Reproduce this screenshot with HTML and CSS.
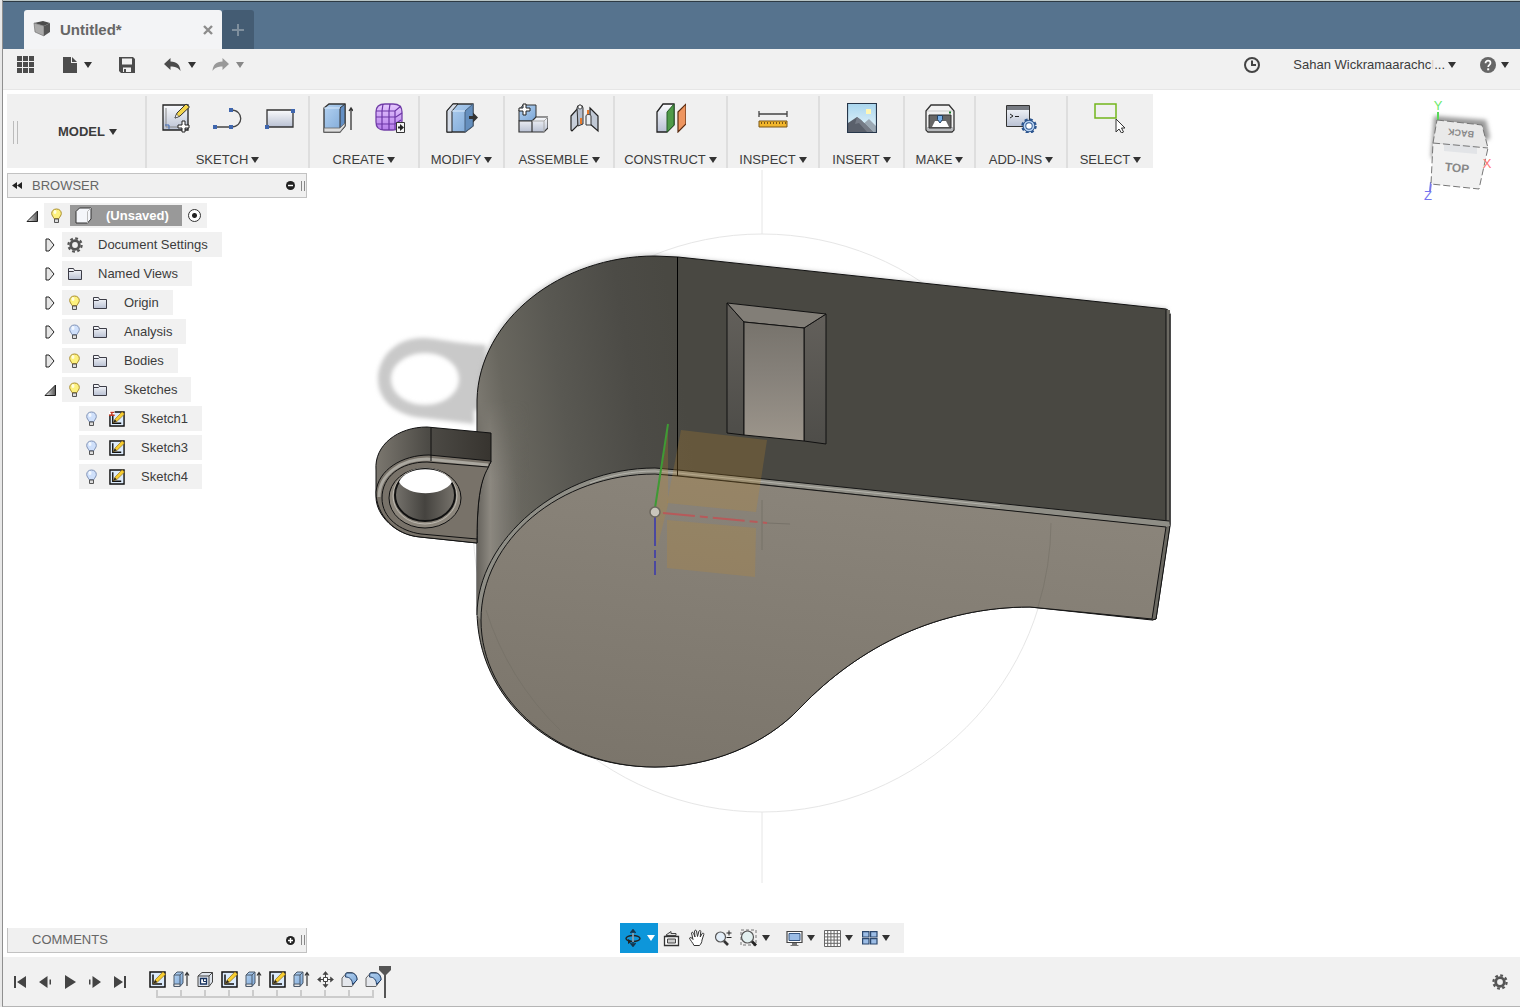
FILE: index.html
```html
<!DOCTYPE html>
<html lang="en">
<head>
<meta charset="utf-8">
<title>Untitled*</title>
<link rel="stylesheet" href="styles.css">
</head>
<body>
<svg class="sprite" aria-hidden="true">
  <defs>
    <linearGradient id="blue" x1="0" y1="0" x2="1" y2="1"><stop offset="0" stop-color="#b5d3f2"/><stop offset="1" stop-color="#7ba6d6"/></linearGradient>
    <linearGradient id="steel" x1="0" y1="0" x2="0" y2="1"><stop offset="0" stop-color="#fafbfd"/><stop offset="1" stop-color="#b9c1d3"/></linearGradient>
    <linearGradient id="violet" x1="0" y1="0" x2="0" y2="1"><stop offset="0" stop-color="#e6c9ff"/><stop offset="1" stop-color="#b57cea"/></linearGradient>
    <linearGradient id="sky" x1="0" y1="0" x2="0" y2="1"><stop offset="0" stop-color="#a9d6ee"/><stop offset="1" stop-color="#e9f6fb"/></linearGradient>
    <linearGradient id="twist" x1="0" y1="0" x2="1" y2="0"><stop offset="0" stop-color="#eee"/><stop offset="1" stop-color="#555"/></linearGradient>
  </defs>
  <symbol id="bulb-on" viewBox="0 0 12 16"><path d="M6 1C3 1 1.200 3 1.200 5.500c0 2 1.500 3 2.300 5h5c.8-2 2.300-3 2.300-5C10.800 3 9 1 6 1z" fill="#fdf17e" stroke="#a98d2c"/><ellipse cx="4.500" cy="4" rx="1.500" ry="2" fill="#fffde0"/><path d="M4 11h4v3.500H4z" fill="#ddd" stroke="#555"/></symbol>
  <symbol id="bulb-off" viewBox="0 0 12 16"><path d="M6 1C3 1 1.200 3 1.200 5.500c0 2 1.500 3 2.300 5h5c.8-2 2.300-3 2.300-5C10.800 3 9 1 6 1z" fill="#cfe0fb" stroke="#8092b5"/><ellipse cx="4.500" cy="4" rx="1.500" ry="2" fill="#f3f8ff"/><path d="M4 11h4v3.500H4z" fill="#ddd" stroke="#555"/></symbol>
  <symbol id="folder" viewBox="0 0 16 16"><path d="M1.500 13.500V2.500h5l1 2h7v9z" fill="url(#steel)" stroke="#3c3c46"/><path d="M1.500 5.500h5l1-1" fill="none" stroke="#3c3c46"/></symbol>
  <symbol id="gear" viewBox="0 0 16 16"><circle cx="8" cy="8" r="4.300" fill="none" stroke="#555" stroke-width="2.800"/><circle cx="8" cy="8" r="6.600" fill="none" stroke="#555" stroke-width="2.200" stroke-dasharray="2.800 2.384"/></symbol>
  <symbol id="sketch" viewBox="0 0 17 17"><path d="M1 1h15v15H1z" fill="#dcebfb" stroke="#111" stroke-width="1.500"/><path d="M4 3.500V13h9" fill="none" stroke="#111" stroke-width="1.500"/><path d="M4.500 12.500l2-4L14 .8l2.500 2.500L8.500 11z" fill="#f8cf31" stroke="#8f6a14" stroke-width=".7"/><path d="M4.500 12.500l1.700-3.600 2 2z" fill="#222"/></symbol>
  <symbol id="extrude" viewBox="0 0 17 17"><path d="M1 4l3-3h6v11l-3 3.500H1z" fill="url(#blue)" stroke="#4d5a6b"/><path d="M1 4h6l3-3M7 4v11" fill="none" stroke="#4d5a6b"/><path d="M1 13h6v2.500H1z" fill="#e5e5e5" stroke="#4d5a6b"/><path d="M14 15V2M12 4.500L14 1.500l2 3" fill="none" stroke="#333" stroke-width="1.200"/></symbol>
  <symbol id="shell" viewBox="0 0 17 17"><path d="M1 5l4-3.500h10.500V11L12 15.500H1z" fill="#dfe5ed" stroke="#444"/><path d="M1 5h11l3.500-3.500M12 5v10.500" fill="none" stroke="#444"/><path d="M3.500 7.500h6v5.500h-6z" fill="#fff" stroke="#17335f" stroke-width="1.300"/><path d="M6.500 7.500v3h3" fill="none" stroke="#17335f"/></symbol>
  <symbol id="move" viewBox="0 0 17 17"><path d="M8.500.5l2.500 3H6zM8.500 16.500l2.500-3H6zM.5 8.500l3-2.500v5zM16.500 8.500l-3-2.500v5z" fill="#444" stroke="#444" stroke-width=".6"/><path d="M8.500 3v3M8.500 11v3M3 8.500h3M11 8.500h3" stroke="#444"/><path d="M6.500 6.500h4v4h-4z" fill="#fff" stroke="#444"/></symbol>
  <symbol id="fillet" viewBox="0 0 17 17"><path d="M1 15.500V7l5-5.500h4c3 0 6 3 6 7l-5 7z" fill="#e4e7ec" stroke="#666"/><path d="M5 2h5c4 0 6 3 6 7l-4.500 4.500C11.500 9 9 6 4.500 6z" fill="url(#blue)" stroke="#1f3e69"/></symbol>
</svg>

<div class="app">
  <header class="tabbar">
    <div class="tab">
      <svg width="18" height="20" viewBox="0 0 18 20"><path d="M1 3l9-2 7 2-6 3z" fill="#4b4b4b"/><path d="M1 3l10 3v10L2 12z" fill="#aaa" stroke="#666" stroke-width=".6"/><path d="M11 6l6-3v9l-6 4z" fill="#555"/></svg>
      <span class="tab-name">Untitled*</span>
      <button class="plain" aria-label="Close tab"><svg width="10" height="10" viewBox="0 0 10 10"><path d="M1 1l8 8M9 1L1 9" stroke="#8c8c8c" stroke-width="2.400"/></svg></button>
    </div>
    <button class="tab-add" aria-label="New tab"><svg width="12" height="12" viewBox="0 0 12 12"><path d="M6 0v12M0 6h12" stroke="#7f8f9d" stroke-width="2"/></svg></button>
  </header>

  <nav class="quickbar">
    <button class="plain q-grid" aria-label="Data panel"><svg width="18" height="18" viewBox="0 0 18 18" fill="#4c4c4c"><path d="M0 0h5v5H0zM6 0h5v5H6zM12 0h5v5h-5zM0 6h5v5H0zM6 6h5v5H6zM12 6h5v5h-5zM0 12h5v5H0zM6 12h5v5H6zM12 12h5v5h-5z"/></svg></button>
    <button class="plain q-file" aria-label="File"><svg width="14" height="16" viewBox="0 0 14 16"><path d="M0 0h8v6h6v10H0z" fill="#4c4c4c"/><path d="M9 0l5 5H9z" fill="#4c4c4c"/></svg><i class="caret"></i></button>
    <button class="plain q-save" aria-label="Save"><svg width="16" height="16" viewBox="0 0 16 16"><path d="M0 0h14l2 2v14H2l-2-2z" fill="#4c4c4c"/><path d="M3 1.500h10v6H3zM4 10.500h8V15H4z" fill="#f1f1f1"/><path d="M5 12h2v3H5z" fill="#4c4c4c"/></svg></button>
    <button class="plain q-undo" aria-label="Undo"><svg width="17" height="14" viewBox="0 0 17 14"><path d="M0 6l6.500-6v3.500C13 3.500 16 7 16.500 13 14 9.500 11 8.500 6.500 8.500V12z" fill="#4c4c4c"/></svg><i class="caret"></i></button>
    <button class="plain q-redo" aria-label="Redo"><svg width="17" height="14" viewBox="0 0 17 14"><path d="M17 6l-6.500-6v3.500C4 3.500 1 7 .5 13 3 9.500 6 8.500 10.500 8.500V12z" fill="#999"/></svg><i class="caret caret-dim"></i></button>
    <span class="spacer"></span>
    <button class="plain" aria-label="Job status"><svg width="18" height="18" viewBox="0 0 18 18" fill="none" stroke="#444" stroke-width="2"><circle cx="9" cy="9" r="7"/><path d="M9 4.500V9h4"/></svg></button>
    <button class="plain q-user"><span>Sahan Wickramaarachc<span class="cut">l</span>...</span><i class="caret"></i></button>
    <button class="plain q-help" aria-label="Help"><svg width="16" height="16" viewBox="0 0 16 16"><circle cx="8" cy="8" r="8" fill="#666"/><path d="M5.500 6.200C5.500 2.800 10.500 3 10.500 6c0 1.800-2.300 1.900-2.300 4" fill="none" stroke="#fff" stroke-width="1.700"/><path d="M7.200 11.300h2v2h-2z" fill="#fff"/></svg><i class="caret"></i></button>
  </nav>

  <main class="workspace">
    <svg class="scene" viewBox="3 90 1517 867" role="img" aria-label="Whistle model">
      <defs>
        <linearGradient id="side" gradientUnits="userSpaceOnUse" x1="477" y1="380" x2="678" y2="350"><stop offset="0" stop-color="#7a776f"/><stop offset=".12" stop-color="#69675f"/><stop offset=".4" stop-color="#595852"/><stop offset=".75" stop-color="#4c4b46"/><stop offset="1" stop-color="#494842"/></linearGradient>
        <linearGradient id="bend" gradientUnits="userSpaceOnUse" x1="477" y1="0" x2="530" y2="0"><stop offset="0" stop-color="#66635d"/><stop offset=".25" stop-color="#8c8880"/><stop offset="1" stop-color="#5f5e58" stop-opacity="0"/></linearGradient>
        <linearGradient id="bendfade" gradientUnits="userSpaceOnUse" x1="0" y1="400" x2="0" y2="480"><stop offset="0" stop-color="#000"/><stop offset="1" stop-color="#fff"/></linearGradient>
        <mask id="lower"><path d="M470 380h100v300H470z" fill="url(#bendfade)"/></mask>
        <linearGradient id="face" gradientUnits="userSpaceOnUse" x1="700" y1="470" x2="660" y2="770"><stop offset="0" stop-color="#8a847a"/><stop offset="1" stop-color="#7b756b"/></linearGradient>
        <linearGradient id="pit" x1="0" y1="0" x2="0" y2="1"><stop offset="0" stop-color="#77736c"/><stop offset=".45" stop-color="#86817a"/><stop offset="1" stop-color="#9c958b"/></linearGradient>
        <linearGradient id="wall" x1="0" y1="0" x2="0" y2="1"><stop offset="0" stop-color="#63605b"/><stop offset="1" stop-color="#4e4d49"/></linearGradient>
        <linearGradient id="lugtop" x1="0" y1="0" x2="1" y2="0"><stop offset="0" stop-color="#7b776f"/><stop offset=".45" stop-color="#4d4b46"/><stop offset="1" stop-color="#37342f"/></linearGradient>
        <linearGradient id="bore" x1="0" y1="0" x2="1" y2="0"><stop offset="0" stop-color="#75726c"/><stop offset=".5" stop-color="#45433f"/><stop offset="1" stop-color="#77736c"/></linearGradient>
        <filter id="soft" x="-10%" y="-10%" width="120%" height="120%"><feGaussianBlur stdDeviation="2"/></filter>
      </defs>
      <g fill="none" stroke="#e6e6e6"><circle cx="762" cy="523" r="289"/><path d="M762 170v64M762 812v71"/></g>
      <path d="M486 345C450 343 438 338 422 338C395 338 378 358 378 379C378 402 398 416 424 418L474 424V410H486z M425 353C443 353 459 364 459 379S443 405 425 405S391 394 391 379S407 353 425 353z" fill="#c9c9c9" fill-rule="evenodd" filter="url(#soft)"/>
      <path d="M479 390C485 310 570 256 655 256L1167 310" fill="none" stroke="#bbb" stroke-width="3" filter="url(#soft)"/>

      <path d="M477 400C479 320 560 256 655 256L678 257L1166 309Q1170 310 1170 314V524L1156 619L1152 620L1030 607C940 607 860 645 800 708C765 745 710 767 655 767C555 767 477 700 477 610z" fill="url(#side)" stroke="#111"/>
      <path d="M477 400H540V540C505 550 490 580 481 620L477 610z" fill="url(#bend)" mask="url(#lower)"/>

      <path d="M376 470C374 445 398 427 427 427L491 433V462C480 478 477 500 477 543L420 537C395 535 376 515 376 497z" fill="url(#lugtop)" stroke="#111"/>
      <path d="M376 492C378 470 402 455 429 455L491 461L488 468C480 482 477 502 477 543L420 537C395 535 376 515 376 492z" fill="#787269" stroke="#111"/>
      <path d="M379 497C379 474 402 459 427 459L488 465" fill="none" stroke="#aaa79f" stroke-width="3"/>
      <path d="M488 467L427 462C400 462 382 477 382 498C382 518 400 531 421 534L477 539" fill="none" stroke="#111"/>
      <path d="M431 427v34" stroke="#111"/>
      <ellipse cx="425" cy="498" rx="36" ry="30" fill="#8c867c" stroke="#111"/>
      <ellipse cx="425" cy="496" rx="32" ry="28" fill="none" stroke="#bdb9b1"/>
      <ellipse cx="425" cy="495" rx="30" ry="26" fill="url(#bore)" stroke="#111" stroke-width="2"/>
      <path d="M399 482C406 465 444 465 452 482C443 497 408 497 399 482z" fill="#fff"/>

      <path d="M1166 310h4v214l-14 95-4 1 14-95z" fill="#6b6962"/>
      <path d="M1166 310v213M1170 314v212" stroke="#111"/>
      <path d="M477 615C477 540 560 468 655 468L678 470L1169 521L1170 526L1165 527L678 475L655 474C560 474 481 540 481 620z" fill="#8f8e86"/>
      <path d="M655 474C560 474 481 540 481 620C481 701 560 767 655 767C710 767 765 745 800 708C860 645 940 607 1030 607L1152 619L1166 527L678 476z" fill="url(#face)"/>
      <path d="M477 615C477 540 560 468 655 468L678 470L1169 521" fill="none" stroke="#151515"/>
      <path d="M590 483C611 475 633 471 655 471L678 473L1000 506" fill="none" stroke="#b3b2ab"/>
      <path d="M655 474C560 474 481 540 481 620C481 701 560 767 655 767C710 767 765 745 800 708C860 645 940 607 1030 607L1152 619L1166 527L678 476z" fill="none" stroke="#151515"/>
      <path d="M1170 526l-14 93-4 1" fill="none" stroke="#151515"/>
      <path d="M677.500 257v219" stroke="#000"/>

      <g stroke="#111" stroke-linejoin="round">
        <path d="M727 303L744 322V435L727 433z" fill="url(#wall)"/>
        <path d="M826 314L804 328V441L826 444z" fill="url(#wall)"/>
        <path d="M727 303L826 314L804 328L744 322z" fill="#827e77"/>
        <path d="M744 322L804 328V441L744 435z" fill="url(#pit)"/>
      </g>

      <g fill="#c08a2a" fill-opacity=".24">
        <path d="M681 430L767 440L756 512L667 503z"/>
        <path d="M667 520L756 528L755 577L667 568z"/>
        <path d="M668 426V505L657 548L655 515z"/>
      </g>
      <path d="M655 508L668 424" stroke="#3f9a35" stroke-width="2"/>
      <path d="M663 513L767 523" stroke="#b65a5a" stroke-width="2" stroke-dasharray="32 5 8 5"/>
      <path d="M767 523L790 524M762 500V550" stroke="#777269"/>
      <path d="M655 514V575" stroke="#4b48a0" stroke-width="2" stroke-dasharray="32 4 8 3"/>
      <circle cx="655" cy="512" r="5" fill="#c9c5bb" stroke="#6c675e" stroke-width="1.500"/>
      <path d="M1051 523A289 289 0 0 1 1038 607M486 610A289 289 0 0 0 560 730" fill="none" stroke="#706b62" stroke-opacity=".5"/>
    </svg>

    <svg class="viewcube" width="80" height="110" viewBox="1420 95 80 110" role="img" aria-label="View cube">
      <path d="M1434 116L1486 120L1490 138L1470 150L1431 158z" fill="#999" filter="url(#soft)"/>
      <path d="M1438 112V121" stroke="#58d858" stroke-width="2"/>
      <path d="M1431 182L1430 191" stroke="#7777e8" stroke-width="2"/>
      <path d="M1437 120L1482 125L1488 148L1433 143z" fill="#e9e9e9"/>
      <path d="M1433 143L1488 148L1479 189L1431 184z" fill="#f1f1f1"/>
      <path d="M1444 143l33 3v8l-33-3z" fill="#e2e4e7"/>
      <path d="M1437 120L1482 125L1488 148L1479 189L1431 184L1433 143zM1433 143L1488 148" fill="none" stroke="#777" stroke-dasharray="7 3"/>
      <text class="cube-top" x="1457" y="172" transform="rotate(6 1457 168)">TOP</text>
      <text class="cube-back" x="1461" y="136" transform="rotate(186 1461 133)">BACK</text>
      <text class="axis axis-y" x="1438" y="110">Y</text>
      <text class="axis axis-x" x="1487" y="168">X</text>
      <text class="axis axis-z" x="1428" y="200">Z</text>
    </svg>

    <div class="ribbon">
      <div class="mode"><span class="grip"></span><button class="plain mode-name">MODEL <i class="caret"></i></button></div>
      <section class="group">
        <div class="tools">
          <button class="plain" aria-label="Create sketch"><svg width="30" height="30" viewBox="0 0 30 30"><path d="M2 2h25v25H2z" fill="url(#steel)" stroke="#222" stroke-width="1.300"/><path d="M5 5v19h19" fill="none" stroke="#888"/><path d="M4 22h4v4" fill="none" stroke="#3e6bb5"/><path d="M14 15l2-5 9-9 3.500 3L19 13z" fill="#f3d54b" stroke="#333"/><path d="M14 15l1.500-4 2.500 2.500z" fill="#fff" stroke="#333" stroke-width=".6"/><path d="M21 18h3v4h4v3h-4v4h-3v-4h-4v-3h4z" fill="#fff" stroke="#222"/></svg></button>
          <button class="plain" aria-label="Line"><svg width="30" height="30" viewBox="0 0 30 30"><path d="M2 24h16c13 0 13-17 0-17" fill="none" stroke="#444" stroke-width="1.300"/><path d="M0 22h4v4H0zM16 22h4v4h-4zM16 5h4v4h-4z" fill="#3f66ae"/></svg></button>
          <button class="plain" aria-label="Rectangle"><svg width="30" height="30" viewBox="0 0 30 30"><path d="M2 7h26v17H2z" fill="url(#steel)" stroke="#333" stroke-width="1.300"/><path d="M0 22h4v4H0zM26 6h4v4h-4z" fill="#3f66ae"/></svg></button>
        </div>
        <button class="plain label">SKETCH <i class="caret"></i></button>
      </section>
      <section class="group">
        <div class="tools">
          <button class="plain" aria-label="Extrude"><svg width="30" height="30" viewBox="0 0 30 30"><path d="M1 5l5-4h16v22l-5 6H1z" fill="url(#blue)" stroke="#333" stroke-width="1.300"/><path d="M17 5l5-4v22l-5 6z" fill="#638fc4" stroke="#333"/><path d="M1 25h16l5-5v3l-5 6H1z" fill="#ddd" stroke="#666" stroke-width=".8"/><path d="M1 5h16" stroke="#d8e8fa"/><path d="M28 27V6M26 8l2-3 2 3" fill="none" stroke="#333" stroke-width="1.300"/></svg></button>
          <button class="plain" aria-label="Create form"><svg width="30" height="30" viewBox="0 0 30 30"><path d="M1 9c0-5 3-8 9-8h8c6 0 9 3 9 8v9c0 6-3 9-9 9h-9c-5 0-8-3-8-8z" fill="url(#violet)" stroke="#7340a8" stroke-width="1.300"/><path d="M1 8h19l6-5M1 14h20l6-4M1 21h19l6-4M8 1L7 8v19M15 1l-1 7v19M20 8v18" fill="none" stroke="#6b35a5" stroke-width="1.200"/><path d="M21.500 19.500h8v10h-8z" fill="#f4f4f4" stroke="#333"/><path d="M23 23.500h2v-2.500l4 3.500-4 3.500V25.500h-2z" fill="#222"/></svg></button>
        </div>
        <button class="plain label">CREATE <i class="caret"></i></button>
      </section>
      <section class="group">
        <div class="tools">
          <button class="plain" aria-label="Press pull"><svg width="32" height="30" viewBox="0 0 32 30"><path d="M1 8l6-7h20v22l-8 6H1z" fill="url(#blue)" stroke="#333" stroke-width="1.300"/><path d="M1 8l6-7h5L6 8v21H1z" fill="#d5dce7" stroke="#222"/><path d="M19 8l8-7v22l-8 6z" fill="#658fbe" stroke="#46617f"/><path d="M6 8h13" stroke="#dcebfa"/><path d="M23 13h4V9.500l5 5-5 5V16h-4z" fill="#333"/></svg></button>
        </div>
        <button class="plain label">MODIFY <i class="caret"></i></button>
      </section>
      <section class="group">
        <div class="tools">
          <button class="plain" aria-label="New component"><svg width="30" height="30" viewBox="0 0 30 30"><path d="M1 7l4-5h13v12l-4 4H1z" fill="url(#blue)" stroke="#333"/><path d="M1 18h13v11H1zM14 18l4-4h12v11l-4 4H14z" fill="url(#steel)" stroke="#333" stroke-width="1.200"/><path d="M14 18h12v11M26 18l4-4" fill="none" stroke="#aaa"/><path d="M5 1h3v4h4v3H8v4H5V8H1V5h4z" fill="#fff" stroke="#222"/></svg></button>
          <button class="plain" aria-label="Joint"><svg width="30" height="30" viewBox="0 0 30 30"><path d="M1 13l7-8v17l-6 6-1-1z" fill="#c7ced9" stroke="#222" stroke-width="1.200"/><path d="M7 5a3 3 0 0 1 6 0v16l-5 2z" fill="#b5bdcb" stroke="#333"/><circle cx="10" cy="4" r="2" fill="#fff" stroke="#333" stroke-width=".8"/><path d="M11 15v6M18 7v5" stroke="#e8792a" stroke-width="2"/><path d="M20 5l8 8v15l-8-7z" fill="#c0c8d4" stroke="#222" stroke-width="1.200"/><path d="M16 13c0-2 5-2 5 0v9h-5z" fill="#edf0f4" stroke="#333"/></svg></button>
        </div>
        <button class="plain label">ASSEMBLE <i class="caret"></i></button>
      </section>
      <section class="group">
        <div class="tools">
          <button class="plain" aria-label="Offset plane"><svg width="30" height="30" viewBox="0 0 30 30"><path d="M1 9l6-8h11v21l-7 7H1z" fill="url(#steel)" stroke="#222" stroke-width="1.300"/><path d="M11 9l7-8v21l-7 7z" fill="#4f9a48" stroke="#275b28"/><path d="M22 9l8-8v20l-8 8z" fill="#ee955f" stroke="#5b2c12" stroke-width="1.200"/></svg></button>
        </div>
        <button class="plain label">CONSTRUCT <i class="caret"></i></button>
      </section>
      <section class="group">
        <div class="tools">
          <button class="plain" aria-label="Measure"><svg width="30" height="30" viewBox="0 0 30 30"><path d="M1 8v6M29 8v6M1 11h28" stroke="#444" stroke-width="1.300"/><path d="M1 18h28v6H1z" fill="#f2b62c" stroke="#7b5716"/><path d="M3 20h25" stroke="#7b5716" stroke-width="2" stroke-dasharray="1 2"/></svg></button>
        </div>
        <button class="plain label">INSPECT <i class="caret"></i></button>
      </section>
      <section class="group">
        <div class="tools">
          <button class="plain" aria-label="Attached canvas"><svg width="30" height="30" viewBox="0 0 30 30"><path d="M.5.500h29v29H.5z" fill="url(#sky)"/><path d="M19 6h5v5h-5z" fill="#fff7b5"/><path d="M15 22l7-6 7 7v6H15z" fill="#9ba8b3"/><path d="M1 20l9-6 4 3 12 12H1z" fill="#5a606b"/><path d="M10 14l-2 7 4-1 8 9h6L14 17z" fill="#757b86"/><path d="M.5.500h29v29H.5z" fill="none" stroke="#26364a" stroke-width="1.200"/></svg></button>
        </div>
        <button class="plain label">INSERT <i class="caret"></i></button>
      </section>
      <section class="group">
        <div class="tools">
          <button class="plain" aria-label="3D print"><svg width="30" height="30" viewBox="0 0 30 30"><path d="M1 8l5-6h18l5 6v19l-2 2H3l-2-2z" fill="#f1f1f1" stroke="#333" stroke-width="1.300"/><path d="M2 24h26v3l-1 1H3l-1-1z" fill="#b8babd"/><path d="M2 8h26" stroke="#ccc"/><path d="M4 12h22v13H4z" fill="#666" stroke="#333"/><path d="M7 24l3-6h11l3 6z" fill="#fff"/><path d="M12.500 12.500h5v4L15 20l-2.500-3.500z" fill="#77afe8" stroke="#24405f"/><path d="M24 8.500h2v2h-2z" fill="#187a28"/></svg></button>
        </div>
        <button class="plain label">MAKE <i class="caret"></i></button>
      </section>
      <section class="group">
        <div class="tools">
          <button class="plain" aria-label="Scripts and add-ins"><svg width="32" height="30" viewBox="0 0 32 30"><path d="M1.500 2.500h23v21h-23z" fill="url(#steel)" stroke="#333"/><path d="M2 3h22v4H2z" fill="#777b82"/><path d="M5 11l3 2-3 2M10 13.500h4" fill="none" stroke="#222"/><circle cx="24" cy="23" r="6" fill="none" stroke="#2d568f" stroke-width="3.500" stroke-dasharray="2.700 2.012"/><circle cx="24" cy="23" r="4.500" fill="#fff" stroke="#2d568f" stroke-width="3.500"/><circle cx="24" cy="23" r="4.500" fill="none" stroke="#b9d4f3" stroke-width="1.700"/></svg></button>
        </div>
        <button class="plain label">ADD-INS <i class="caret"></i></button>
      </section>
      <section class="group">
        <div class="tools">
          <button class="plain" aria-label="Select"><svg width="36" height="30" viewBox="0 0 36 30"><path d="M2 1h21v14H2z" fill="none" stroke="#72b51b" stroke-width="1.500"/><path d="M23 16v13l3-3 2.500 4 2-1-2-4h3.500z" fill="#fff" stroke="#333"/></svg></button>
        </div>
        <button class="plain label">SELECT <i class="caret"></i></button>
      </section>
    </div>

    <aside class="browser">
      <div class="panel-head">
        <svg class="collapse" width="10" height="7" viewBox="0 0 10 7"><path d="M0 3.500L5 0v7zM5 3.500L10 0v7z" fill="#222"/></svg>
        <span class="panel-name">BROWSER</span>
        <button class="plain" aria-label="Hide browser"><svg width="9" height="9" viewBox="0 0 9 9"><circle cx="4.500" cy="4.500" r="4.500" fill="#222"/><path d="M2 4.500h5" stroke="#fff" stroke-width="1.400"/></svg></button>
        <span class="panel-grip"></span>
      </div>
      <ul class="tree">
        <li>
          <div class="node root"><button class="plain twist" aria-label="Collapse"><svg width="12" height="12" viewBox="0 0 12 12"><path d="M1 11.500H11.500V1z" fill="url(#twist)" stroke="#222"/></svg></button>
            <div class="item item-root"><svg class="bulb"><use href="#bulb-on"/></svg><span class="chosen"><svg width="17" height="17" viewBox="0 0 17 17"><path d="M1 4.500L4.500 1H16v11l-3.500 4H1z" fill="#f4f6fa" stroke="#333"/><path d="M12.500 16V4.500L16 1" fill="none" stroke="#bbb"/></svg><b>(Unsaved)</b></span><label class="active-pick"><input type="radio" checked aria-label="Activate component"></label></div></div>
          <ul>
            <li><div class="node"><button class="plain twist" aria-label="Expand"><svg width="12" height="14" viewBox="-1 0 12 14"><path d="M1 1l3 0 5 6-5 6H1z" fill="#e6e6e6" stroke="#222"/></svg></button><div class="item"><svg class="icon"><use href="#gear"/></svg><span class="name">Document Settings</span></div></div></li>
            <li><div class="node"><button class="plain twist" aria-label="Expand"><svg width="12" height="14" viewBox="-1 0 12 14"><path d="M1 1l3 0 5 6-5 6H1z" fill="#e6e6e6" stroke="#222"/></svg></button><div class="item"><svg class="icon"><use href="#folder"/></svg><span class="name">Named Views</span></div></div></li>
            <li><div class="node"><button class="plain twist" aria-label="Expand"><svg width="12" height="14" viewBox="-1 0 12 14"><path d="M1 1l3 0 5 6-5 6H1z" fill="#e6e6e6" stroke="#222"/></svg></button><div class="item"><svg class="bulb"><use href="#bulb-on"/></svg><svg class="icon"><use href="#folder"/></svg><span class="name">Origin</span></div></div></li>
            <li><div class="node"><button class="plain twist" aria-label="Expand"><svg width="12" height="14" viewBox="-1 0 12 14"><path d="M1 1l3 0 5 6-5 6H1z" fill="#e6e6e6" stroke="#222"/></svg></button><div class="item"><svg class="bulb"><use href="#bulb-off"/></svg><svg class="icon"><use href="#folder"/></svg><span class="name">Analysis</span></div></div></li>
            <li><div class="node"><button class="plain twist" aria-label="Expand"><svg width="12" height="14" viewBox="-1 0 12 14"><path d="M1 1l3 0 5 6-5 6H1z" fill="#e6e6e6" stroke="#222"/></svg></button><div class="item"><svg class="bulb"><use href="#bulb-on"/></svg><svg class="icon"><use href="#folder"/></svg><span class="name">Bodies</span></div></div></li>
            <li><div class="node"><button class="plain twist" aria-label="Collapse"><svg width="12" height="12" viewBox="0 0 12 12"><path d="M1 11.500H11.500V1z" fill="url(#twist)" stroke="#222"/></svg></button><div class="item"><svg class="bulb"><use href="#bulb-on"/></svg><svg class="icon"><use href="#folder"/></svg><span class="name">Sketches</span></div></div>
              <ul>
                <li><div class="node"><span class="twist"></span><div class="item"><svg class="bulb"><use href="#bulb-off"/></svg><svg class="icon" viewBox="0 0 17 17"><use href="#sketch"/><path d="M0 0h6v4H0z" fill="#fff"/><path d="M0 4.500h6M1.500 1.500h4M3 1v3" stroke="#c63a22" stroke-width="1.500"/></svg><span class="name">Sketch1</span></div></div></li>
                <li><div class="node"><span class="twist"></span><div class="item"><svg class="bulb"><use href="#bulb-off"/></svg><svg class="icon"><use href="#sketch"/></svg><span class="name">Sketch3</span></div></div></li>
                <li><div class="node"><span class="twist"></span><div class="item"><svg class="bulb"><use href="#bulb-off"/></svg><svg class="icon"><use href="#sketch"/></svg><span class="name">Sketch4</span></div></div></li>
              </ul>
            </li>
          </ul>
        </li>
      </ul>
    </aside>

    <div class="dock">
      <div class="panel-head comments">
        <span class="collapse"></span>
        <span class="panel-name">COMMENTS</span>
        <button class="plain" aria-label="Show comments"><svg width="9" height="9" viewBox="0 0 9 9"><circle cx="4.500" cy="4.500" r="4.500" fill="#222"/><path d="M2 4.500h5M4.500 2v5" stroke="#fff" stroke-width="1.400"/></svg></button>
        <span class="panel-grip"></span>
      </div>
      <div class="viewbar">
        <button class="plain orbit" aria-label="Orbit"><svg width="18" height="18" viewBox="0 0 18 18"><ellipse cx="8" cy="9.500" rx="7" ry="3" fill="none" stroke="#222" stroke-width="1.400"/><path d="M8 1v16M5.500 4L8 .8 10.500 4M5.500 14L8 17.200 10.500 14" fill="none" stroke="#14354d" stroke-width="1.500"/><path d="M8 4v9" stroke="#dff0fa"/><path d="M3 10l4 2.500L3 15z" fill="#222"/></svg><i class="caret caret-light"></i></button>
        <button class="plain" aria-label="Look at"><svg width="17" height="17" viewBox="0 0 17 17"><path d="M1.500 6.500h14v9h-14z" fill="#fff" stroke="#333" stroke-width="1.300"/><path d="M4.500 9h8v4h-8z" fill="#ccc" stroke="#444"/><path d="M3 5l5-3.500v2h5v2H3z" fill="#ddd" stroke="#444"/></svg></button>
        <button class="plain" aria-label="Pan"><svg width="18" height="18" viewBox="0 0 18 18"><path d="M6 16.500C5 14 2 11 1.500 9c.5-1 2-.8 3.500 1.500L3.500 4c.3-1 1.500-1 2 .2L7 8 6.500 2c.5-1.200 1.700-1 2 0L9.500 7.500 11 2c.6-1 1.900-.6 1.800.5L12.200 8l2-3.500c1-.8 2 0 1.600 1L14 11c0 2-1 4-2.500 5.500z" fill="#fff" stroke="#333"/></svg></button>
        <button class="plain" aria-label="Zoom"><svg width="18" height="18" viewBox="0 0 18 18"><circle cx="6.500" cy="8" r="5" fill="#e3eef8" stroke="#555" stroke-width="1.200"/><path d="M10 12l4 4" stroke="#333" stroke-width="2.600"/><path d="M12.500 4h5M15 1.500v5M12.500 8.500h5" stroke="#222"/></svg></button>
        <button class="plain" aria-label="Fit"><svg width="18" height="18" viewBox="0 0 18 18"><path d="M1 1h15v15H1z" fill="none" stroke="#777" stroke-dasharray="3 2"/><circle cx="7.500" cy="8" r="6" fill="#e3f0f0" stroke="#555" stroke-width="1.200"/><path d="M12 12.500l4 4" stroke="#222" stroke-width="2.800"/></svg><i class="caret"></i></button>
        <button class="plain" aria-label="Display settings"><svg width="17" height="17" viewBox="0 0 17 17"><path d="M1 1.500h15v11H1z" fill="#fff" stroke="#444" stroke-width="1.200"/><path d="M3 3.500h11v7H3z" fill="#9cbde6" stroke="#34547f"/><path d="M6 13h5v2h1.500v1h-8v-1H6z" fill="#777"/></svg><i class="caret"></i></button>
        <button class="plain" aria-label="Grid and snaps"><svg width="17" height="17" viewBox="0 0 17 17"><path d="M.5.500h16v16H.5zM3.700.500v16M6.900.500v16M10.100.500v16M13.300.500v16M.5 3.700h16M.5 6.900h16M.5 10.100h16M.5 13.300h16" fill="#fff" stroke="#666"/></svg><i class="caret"></i></button>
        <button class="plain" aria-label="Viewports"><svg width="16" height="14" viewBox="0 0 16 14"><path d="M.6.600h6.400v5.400H.6zM8.600.600H15v5.400H8.600zM.6 7.600H7V13H.6zM8.600 7.600H15V13H8.600z" fill="#9cbde6" stroke="#2c486e" stroke-width="1.200"/></svg><i class="caret"></i></button>
      </div>
    </div>
  </main>

  <footer class="timeline">
    <div class="player">
      <button class="plain" aria-label="Go to start"><svg width="14" height="16" viewBox="0 0 14 16"><path d="M1 2h2v12H1zM13 2v12L4 8z" fill="#444"/></svg></button>
      <button class="plain" aria-label="Step back"><svg width="14" height="16" viewBox="0 0 14 16"><path d="M9.500 2v12L1 8zM11.500 5.500H13v5h-1.500z" fill="#444"/></svg></button>
      <button class="plain" aria-label="Play"><svg width="14" height="16" viewBox="0 0 14 16"><path d="M2 1l11 7-11 7z" fill="#444"/></svg></button>
      <button class="plain" aria-label="Step forward"><svg width="14" height="16" viewBox="0 0 14 16"><path d="M4.500 2v12L13 8zM1 5.500h1.500v5H1z" fill="#444"/></svg></button>
      <button class="plain" aria-label="Go to end"><svg width="14" height="16" viewBox="0 0 14 16"><path d="M11 2h2v12h-2zM1 2v12l9-6z" fill="#444"/></svg></button>
    </div>
    <ol class="history">
      <li><svg class="feat"><use href="#sketch"/></svg></li>
      <li><svg class="feat"><use href="#extrude"/></svg></li>
      <li><svg class="feat"><use href="#shell"/></svg></li>
      <li><svg class="feat"><use href="#sketch"/></svg></li>
      <li><svg class="feat"><use href="#extrude"/></svg></li>
      <li><svg class="feat"><use href="#sketch"/></svg></li>
      <li><svg class="feat"><use href="#extrude"/></svg></li>
      <li><svg class="feat"><use href="#move"/></svg></li>
      <li><svg class="feat"><use href="#fillet"/></svg></li>
      <li><svg class="feat"><use href="#fillet"/></svg></li>
    </ol>
    <svg class="marker" width="12" height="32" viewBox="0 0 12 32"><path d="M0 0h12v4L7 9v23H5V9L0 4z" fill="#555"/></svg>
    <span class="spacer"></span>
    <button class="plain" aria-label="Timeline settings"><svg class="icon"><use href="#gear"/></svg></button>
  </footer>
</div>
</body>
</html>
```
FILE: styles.css
```css
* { box-sizing: border-box; }
body {
  margin: 0;
  background: #e8e8e8;
  color: #3c3c3c;
  font: 13px/16px "Liberation Sans", Arial, sans-serif;
}
svg { display: block; flex: none; }
ul, ol { list-style: none; margin: 0; padding: 0; }
.sprite { position: absolute; width: 0; height: 0; }
.plain {
  display: flex;
  align-items: center;
  border: 0;
  padding: 0;
  background: none;
  color: inherit;
  font: inherit;
  white-space: nowrap;
}
.spacer { flex: 1; }
.caret {
  width: 0;
  height: 0;
  border: 4px solid transparent;
  border-top: 6px solid #333;
  border-bottom: 0;
}
.caret-dim { border-top-color: #888; }
.caret-light { border-top-color: #fff; }

.app {
  display: flex;
  flex-direction: column;
  min-height: 100vh;
  margin-left: 2px;
  border-left: 1px solid #8f8f8f;
  border-bottom: 1px solid #b5b5b5;
  background: #fff;
}

/* Document tabs */
.tabbar {
  display: flex;
  align-items: flex-end;
  height: 49px;
  padding-left: 21px;
  border-top: 1px solid #b7c3c4;
  background: #56738e;
  box-shadow: inset 0 1px #2d3a44;
}
.tab {
  display: flex;
  align-items: center;
  gap: 9px;
  width: 198px;
  height: 39px;
  padding: 0 9px;
  border-radius: 3px 3px 0 0;
  background: #f3f4f6;
}
.tab-name { flex: 1; color: #666; font-size: 15px; font-weight: bold; }
.tab-add {
  display: flex;
  align-items: center;
  justify-content: center;
  width: 32px;
  height: 39px;
  border: 0;
  border-radius: 3px 3px 0 0;
  background: #445c73;
}

/* Quick access bar */
.quickbar {
  display: flex;
  align-items: center;
  height: 41px;
  padding: 0 11px 9px 14px;
  border-bottom: 1px solid #e6e6e6;
  background: #f1f1f1;
}
.q-file, .q-undo, .q-redo { gap: 7px; }
.q-file { margin-left: 28px; }
.q-save { margin-left: 27px; }
.q-undo { margin-left: 29px; }
.q-redo { margin-left: 16px; }
.q-user { gap: 3px; margin-left: 32px; }
.q-help { gap: 5px; margin-left: 24px; }
.cut { color: #e3d2c4; }

/* Workspace */
.workspace {
  position: relative;
  display: flex;
  flex: 1;
  flex-direction: column;
  padding: 4px;
}
.scene { position: absolute; inset: 0; width: 100%; height: 100%; }
.viewcube { position: absolute; top: 5px; right: 20px; }
.cube-top, .cube-back, .axis { text-anchor: middle; }
.cube-top { fill: #888; font-size: 12px; font-weight: bold; }
.cube-back { fill: #888; font-size: 9px; font-weight: bold; }
.axis { font-size: 13px; }
.axis-x { fill: #ff7272; }
.axis-y { fill: #6cea6c; }
.axis-z { fill: #7474ef; }
.ribbon, .browser, .dock { position: relative; }

.ribbon {
  display: grid;
  grid-template-columns: 140px 163px 110px 85px 110px 113px 92px 85px 71px 92px 85px;
  align-self: flex-start;
  height: 74px;
  padding: 2px 0;
  background: #f0f0f0;
}
.mode, .group { border-right: 2px solid #dedede; }
.group:last-child { border-right: 0; }
.mode { display: flex; align-items: center; padding-left: 6px; }
.grip { width: 5px; height: 23px; border: solid #bbb; border-width: 0 1px; }
.mode-name { gap: 4px; margin-left: 40px; font-weight: bold; }
.group {
  display: flex;
  flex-direction: column;
  align-items: center;
  padding-top: 7px;
}
.tools { display: flex; gap: 22px; height: 30px; }
.label { gap: 3px; margin-top: 19px; }

.panel-head {
  display: flex;
  align-items: center;
  width: 300px;
  height: 25px;
  padding: 0 1px 0 4px;
  border: 1px solid #c2c2c2;
  background: #f0f0f0;
  color: #666;
}
.collapse { width: 10px; }
.panel-name { flex: 1; margin-left: 10px; }
.panel-grip { width: 4px; height: 10px; margin-left: 6px; border: solid #888; border-width: 0 1px; }

.browser { margin-top: 5px; }
.tree { padding: 5px 0 0 17px; }
.tree ul { padding-left: 18px; }
.tree ul ul { padding-left: 17px; }
.node { display: flex; align-items: center; height: 25px; margin-bottom: 4px; }
.twist { width: 20px; }
.twist svg { margin-left: 2px; }
.item {
  display: flex;
  align-items: center;
  height: 25px;
  padding: 0 14px 0 5px;
  background: #f1f1f1;
}
.item-root { padding: 0 6px 0 5px; }
.icon { width: 16px; height: 16px; }
.bulb { width: 15px; height: 16px; margin-right: 10px; }
.name { margin-left: 15px; }
.item .bulb + .icon + .name { margin-left: 16px; }
.item-root .bulb { margin-right: 6px; }
.chosen {
  display: flex;
  align-items: center;
  gap: 14px;
  height: 21px;
  width: 112px;
  padding-left: 5px;
  background: #999;
  color: #fff;
}
.active-pick { display: flex; margin-left: 6px; }
.active-pick input {
  appearance: none;
  width: 13px;
  height: 13px;
  margin: 0;
  border: 1px solid #333;
  border-radius: 50%;
  background: radial-gradient(circle, #222 0 2px, #fff 3px);
}

.dock {
  display: grid;
  grid-template-columns: 1fr auto 1fr;
  align-items: end;
  margin-top: auto;
}
.comments { border-top: 0; }
.viewbar {
  display: flex;
  align-items: center;
  gap: 8px;
  height: 30px;
  padding-right: 14px;
  background: #f0f0f0;
}
.viewbar .plain { gap: 4px; }
.viewbar .plain:nth-child(6) { margin-left: 8px; }
.viewbar .plain:nth-child(n+7) { margin-left: 1px; }
.viewbar .orbit { height: 30px; width: 38px; margin-right: -3px; padding-left: 5px; background: #0d96da; }

/* Timeline */
.timeline {
  display: flex;
  align-items: center;
  height: 49px;
  padding: 0 12px 0 10px;
  background: #f1f1f1;
}
.player { display: flex; gap: 11px; }
.history { display: flex; margin: 6px 0 0 18px; }
.history li { display: flex; flex-direction: column; align-items: center; gap: 2px; width: 24px; }
.feat { width: 17px; height: 17px; }
.history li::after {
  content: "";
  width: 24px;
  height: 8px;
  background:
    linear-gradient(#ccc, #ccc) center top / 2px 6px no-repeat,
    linear-gradient(#ccc, #ccc) left bottom / 24px 2px no-repeat;
}
.history li:first-child::after {
  background-position: center top, right bottom;
  background-size: 2px 6px, 13px 2px;
}
.history li:last-child::after { background-size: 2px 6px, 13px 2px; }
.marker { margin-left: -6px; }
```
